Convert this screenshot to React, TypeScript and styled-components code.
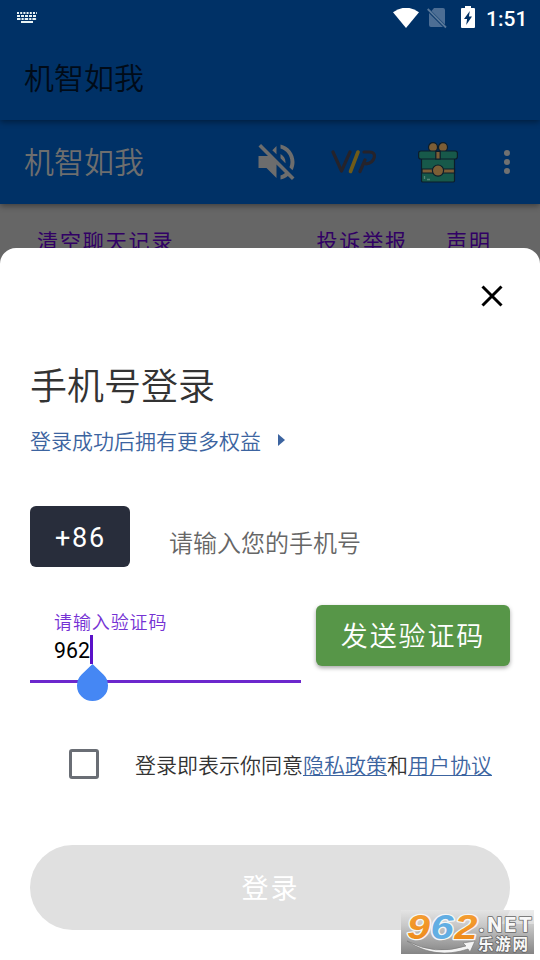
import React from "react";
import styled, { createGlobalStyle } from "styled-components";

const Global = createGlobalStyle`
  * { box-sizing: border-box; }
  body {
    margin: 0;
    background: #fff;
    font-family: Roboto, "Noto Sans CJK SC", sans-serif;
    font-weight: 350;
  }
  button { font: inherit; border: 0; padding: 0; }
`;

const Screen = styled.main`
  width: 540px;
  height: 960px;
  display: flex;
  flex-direction: column;
  overflow: hidden;
  background: linear-gradient(#666 0 300px, #fff 300px);
  position: relative;
`;

const Bar = styled.header<{ $h: number; $layer: number }>`
  height: ${(p) => p.$h}px;
  flex: none;
  background: #003166;
  position: relative;
  z-index: ${(p) => p.$layer};
  box-shadow: 0 2px 6px rgba(0, 0, 0, 0.4);
`;

const TopBar = styled(Bar)`
  display: flex;
  flex-direction: column;
`;

const StatusBar = styled.div`
  height: 36px;
  display: flex;
  align-items: center;
  padding: 0 12px 0 17px;
`;

const StatusIcons = styled.div`
  margin-left: auto;
  display: flex;
  align-items: center;
`;

const Clock = styled.span`
  color: #fff;
  font-size: 21px;
  font-weight: 500;
  line-height: 36px;
  width: 42px;
  margin-left: 11px;
  padding-top: 2px;
`;

const AppTitle = styled.h1<{ $color: string }>`
  margin: 0;
  padding: 2px 0 0 24px;
  font-size: 30px;
  font-weight: 350;
  line-height: 82px;
  color: ${(p) => p.$color};
`;

const ToolBar = styled(Bar)`
  display: flex;
  align-items: center;
`;

const Actions = styled.div`
  margin-left: auto;
  padding-right: 30px;
  display: flex;
  align-items: center;
`;

const Links = styled.nav`
  height: 44px;
  flex: none;
  display: flex;
  padding: 23px 0 0 37px;
`;

const TextLink = styled.span<{ $gap: number }>`
  margin-right: ${(p) => p.$gap}px;
  font-size: 21px;
  font-weight: 400;
  line-height: 30px;
  letter-spacing: 1.9px;
  white-space: nowrap;
  color: #310065;
`;

const Sheet = styled.section`
  flex: 1;
  background: #fff;
  border-radius: 16px 16px 0 0;
  padding: 0 30px;
  display: flex;
  flex-direction: column;
  position: relative;
`;

const CloseRow = styled.div`
  height: 96px;
  display: flex;
  justify-content: flex-end;
  align-items: center;
  padding-right: 6px;
`;

const Heading = styled.h2`
  margin: 14px 0 0;
  height: 60px;
  line-height: 60px;
  font-size: 37px;
  font-weight: 350;
  color: #333;
`;

const Benefits = styled.p`
  margin: 9px 0 0;
  height: 30px;
  display: flex;
  align-items: center;
  gap: 17px;
  font-size: 21px;
  line-height: 30px;
  color: #3c64a0;
`;

const Triangle = styled.svg`
  margin-top: -4px;
`;

const PhoneRow = styled.div`
  margin-top: 49px;
  height: 61px;
  display: flex;
`;

const CountryCode = styled.button`
  width: 100px;
  height: 61px;
  border-radius: 6px;
  background: #282d3b;
  color: #fff;
  font-size: 27px;
  font-weight: 400;
  letter-spacing: 1.8px;
  line-height: 61px;
  padding: 2px 0 0 1px;
`;

const Placeholder = styled.span`
  margin: 8px 0 0 39px;
  font-size: 24px;
  line-height: 60px;
  color: #666;
`;

const CodeRow = styled.div`
  margin-top: 38px;
  height: 78px;
  display: flex;
  justify-content: space-between;
  align-items: flex-start;
`;

const CodeField = styled.div`
  width: 271px;
  height: 78px;
  border-bottom: 3px solid #6c28cd;
  padding-left: 24px;
  display: flex;
  flex-direction: column;
`;

const FieldLabel = styled.label`
  margin-top: 6px;
  font-size: 18px;
  line-height: 24px;
  letter-spacing: 0.9px;
  color: #7532d4;
`;

const Value = styled.div`
  display: flex;
  align-items: flex-start;
  height: 29px;
  line-height: 32px;
  font-size: 21.3px;
  font-weight: 400;
  color: #000;
`;

const Caret = styled.span`
  position: relative;
  width: 3px;
  height: 29px;
  background: #5a12c8;
`;

const Handle = styled.svg`
  position: absolute;
  top: 29px;
  left: -13px;
`;

const SendButton = styled.button`
  width: 194px;
  height: 61px;
  border-radius: 6px;
  background: #579648;
  color: #fff;
  font-size: 27px;
  letter-spacing: 1.9px;
  line-height: 57px;
  padding-top: 4px;
  box-shadow: 0 2px 4px rgba(0, 0, 0, 0.35);
`;

const AgreeRow = styled.div`
  margin-top: 61px;
  height: 40px;
  padding-left: 39px;
  display: flex;
  align-items: center;
`;

const CheckBox = styled.span`
  width: 30px;
  height: 30px;
  border: 3px solid #6a6e75;
  border-radius: 3px;
`;

const Agreement = styled.p`
  margin: 4px 0 0 36px;
  font-size: 21px;
  line-height: 36px;
  color: #333;
  white-space: nowrap;
`;

const Policy = styled.span`
  color: #3c64a0;
  text-decoration: underline;
  text-decoration-thickness: 1px;
  text-underline-offset: 2px;
`;

const LoginButton = styled.button`
  margin-top: 61px;
  height: 85px;
  flex: none;
  border-radius: 43px;
  background: #e0e0e0;
  color: #fff;
  font-size: 27px;
  font-weight: 400;
  letter-spacing: 1.9px;
  line-height: 81px;
  padding: 4px 0 0 1px;
`;

const Watermark = styled.svg`
  position: absolute;
  left: 401px;
  top: 910px;
  z-index: 5;
`;

const NoSim = styled.svg`
  margin-left: 8px;
`;

const Battery = styled.svg`
  margin: -2px 0 0 14px;
`;

const Vip = styled.svg`
  margin-left: 36px;
`;

const Gift = styled.svg`
  margin-left: 41px;
`;

const More = styled.svg`
  margin-left: 46px;
`;

const KeyboardIcon = () => (
  <svg width="20" height="12" viewBox="0 0 20 12" stroke="#e8f3f5" strokeWidth="2">
    <path d="M0 1H20" strokeDasharray="2 1.2 2 1.2" />
    <path d="M0 4H20" strokeDasharray="3 1" />
    <path d="M0 7H20" strokeDasharray="3.5 1 2.2 1" />
    <path d="M4 10H16" />
  </svg>
);

const WifiIcon = () => (
  <svg width="26" height="21" viewBox="0 0 26 21">
    <path d="M0 4.2Q13-4.8 26 4.2L13 20Z" fill="#fff" />
  </svg>
);

const NoSimIcon = () => (
  <NoSim width="20" height="22" viewBox="0 0 20 22">
    <path d="M7 1H16Q18 1 18 3V17.5L4.5 4ZM2 6L16 20H4Q2 20 2 18Z" fill="#4d6e94" />
    <path d="M.7 2L19 20.5" stroke="#597899" strokeWidth="1.8" />
  </NoSim>
);

const BatteryIcon = () => (
  <Battery width="14" height="22" viewBox="0 0 14 22">
    <path d="M4 0H10V2H13Q14 2 14 3V21Q14 22 13 22H1Q0 22 0 21V3Q0 2 1 2H4Z" fill="#fff" />
    <path d="M8.8 5L3 13H6.1L5.2 19L11 10.6H7.9Z" fill="#003166" />
  </Battery>
);

const MutedIcon = () => (
  <svg width="37" height="36" viewBox="3 3 18 18" fill="#6d6d6d">
    <path d="M16.5 12c0-1.77-1.02-3.29-2.5-4.03v2.21l2.45 2.45c.03-.2.05-.41.05-.63zm2.5 0c0 .94-.2 1.82-.54 2.64l1.51 1.51C20.63 14.91 21 13.5 21 12c0-4.28-2.99-7.86-7-8.77v2.06c2.89.86 5 3.54 5 6.71zM4.27 3L3 4.27 7.73 9H3v6h4l5 5v-6.73l4.25 4.25c-.67.52-1.42.93-2.25 1.18v2.06c1.38-.31 2.63-.95 3.69-1.81L19.73 21 21 19.73l-9-9L4.27 3zM12 4L9.91 6.09 12 8.18V4z" />
  </svg>
);

const VipIcon = () => (
  <Vip
    width="46"
    height="26"
    viewBox="0 0 46 26"
    fill="none"
    strokeWidth="3.2"
    strokeLinecap="round"
    strokeLinejoin="round"
  >
    <path d="M2 3L10.5 22L19 3M29 22.5L34 11M33 3H38.5Q44.5 3.2 43.2 8.5Q41.5 14.5 35 14.8" stroke="#25232b" />
    <path d="M27 3L19.5 22.5" stroke="#705b18" strokeWidth="3.6" />
  </Vip>
);

const GiftIcon = () => (
  <Gift width="40" height="41" viewBox="0 0 40 41" stroke="#0c1d2a" strokeWidth="1.2">
    <rect x="3.5" y="15" width="33" height="25" rx="1.2" fill="#17594a" />
    <path d="M4 27H36.5V31H4Z" fill="#7c5e36" />
    <circle cx="15" cy="5.2" r="4.5" fill="#7c5e36" />
    <circle cx="25" cy="5.2" r="4.5" fill="#7c5e36" />
    <rect x=".6" y="9" width="38.8" height="8" rx="2.2" fill="#17594a" />
    <path d="M17.8 9.5H22.2V17H17.8Z" fill="#7c5e36" />
    <circle cx="20" cy="28.6" r="5.6" fill="#7c5e36" />
    <path d="M6.5 34V37M9 37.5H12" stroke="#548377" strokeWidth="1.3" />
  </Gift>
);

const MoreIcon = () => (
  <More width="6" height="26" viewBox="0 0 6 26" fill="#717171">
    <circle cx="3" cy="4" r="3" />
    <circle cx="3" cy="13" r="3" />
    <circle cx="3" cy="22" r="3" />
  </More>
);

const SiteMark = () => (
  <Watermark width="133" height="44" viewBox="0 0 133 44">
    <defs>
      <linearGradient id="plate" x1="0" y1="0" x2="0" y2="1">
        <stop offset="0" stopColor="#e4e4e4" />
        <stop offset=".35" stopColor="#c8c8c8" />
        <stop offset="1" stopColor="#858585" />
      </linearGradient>
      <linearGradient id="orange" x1="0" y1="0" x2="0" y2="1">
        <stop offset="0" stopColor="#f5a23a" />
        <stop offset="1" stopColor="#ed8715" />
      </linearGradient>
    </defs>
    <path d="M0 0H133V44H0Z" fill="url(#plate)" />
    <path d="M109 0H133V14H99Q106 8 109 0Z" fill="#fff" opacity=".35" />
    <g
      fontFamily="Liberation Sans, sans-serif"
      fontWeight="700"
      fontStyle="italic"
      fontSize="35"
      stroke="#f6f6f6"
      strokeWidth="2.6"
      strokeLinejoin="round"
      paintOrder="stroke"
    >
      <text x="6" y="29" fill="url(#orange)" textLength="23" lengthAdjust="spacingAndGlyphs">9</text>
      <text x="29.5" y="29" fill="#62aee3" textLength="23" lengthAdjust="spacingAndGlyphs">6</text>
      <text x="53.5" y="29" fill="url(#orange)" textLength="23" lengthAdjust="spacingAndGlyphs">2</text>
    </g>
    <path d="M6 31Q34 46 65 36L62 33L74 31L69 42L67 39Q34 50 6 31Z" fill="#f4f4f4" stroke="#777" strokeWidth=".6" />
    <g fill="#f8f8f8" stroke="#666" strokeWidth="1.6" paintOrder="stroke" strokeLinejoin="round">
      <text x="77" y="22" fontFamily="Inter, sans-serif" fontWeight="800" fontSize="19.5" textLength="54">
        .NET
      </text>
      <text x="77" y="40" fontFamily="Noto Sans CJK SC, sans-serif" fontWeight="700" fontSize="15.5" textLength="50">
        乐游网
      </text>
    </g>
  </Watermark>
);

export default function App() {
  return (
    <>
      <Global />
      <Screen>
        <TopBar $h={120} $layer={2}>
          <StatusBar>
            <KeyboardIcon />
            <StatusIcons>
              <WifiIcon />
              <NoSimIcon />
              <BatteryIcon />
              <Clock>1:51</Clock>
            </StatusIcons>
          </StatusBar>
          <AppTitle $color="#000b18">机智如我</AppTitle>
        </TopBar>
        <ToolBar $h={84} $layer={1}>
          <AppTitle $color="#6e6e6e">机智如我</AppTitle>
          <Actions>
            <MutedIcon />
            <VipIcon />
            <GiftIcon />
            <MoreIcon />
          </Actions>
        </ToolBar>
        <Links>
          <TextLink $gap={142}>清空聊天记录</TextLink>
          <TextLink $gap={38}>投诉举报</TextLink>
          <TextLink $gap={0}>声明</TextLink>
        </Links>
        <Sheet>
          <CloseRow>
            <svg width="24" height="24" viewBox="0 0 24 24" stroke="#000" strokeWidth="3">
              <path d="M2.5 2.5L21.5 21.5M21.5 2.5L2.5 21.5" />
            </svg>
          </CloseRow>
          <Heading>手机号登录</Heading>
          <Benefits>
            登录成功后拥有更多权益
            <Triangle width="8" height="12" viewBox="0 0 8 12">
              <path d="M0 0L7 6L0 12Z" fill="#3c64a0" />
            </Triangle>
          </Benefits>
          <PhoneRow>
            <CountryCode>+86</CountryCode>
            <Placeholder>请输入您的手机号</Placeholder>
          </PhoneRow>
          <CodeRow>
            <CodeField>
              <FieldLabel>请输入验证码</FieldLabel>
              <Value>
                962
                <Caret>
                  <Handle width="32" height="38" viewBox="0 0 32 38">
                    <path d="M15.5 0L26.4 10.6A15.5 15.5 0 1 1 4.6 10.6Z" fill="#4587f4" />
                  </Handle>
                </Caret>
              </Value>
            </CodeField>
            <SendButton>发送验证码</SendButton>
          </CodeRow>
          <AgreeRow>
            <CheckBox />
            <Agreement>
              登录即表示你同意<Policy>隐私政策</Policy>和<Policy>用户协议</Policy>
            </Agreement>
          </AgreeRow>
          <LoginButton>登录</LoginButton>
        </Sheet>
        <SiteMark />
      </Screen>
    </>
  );
}
